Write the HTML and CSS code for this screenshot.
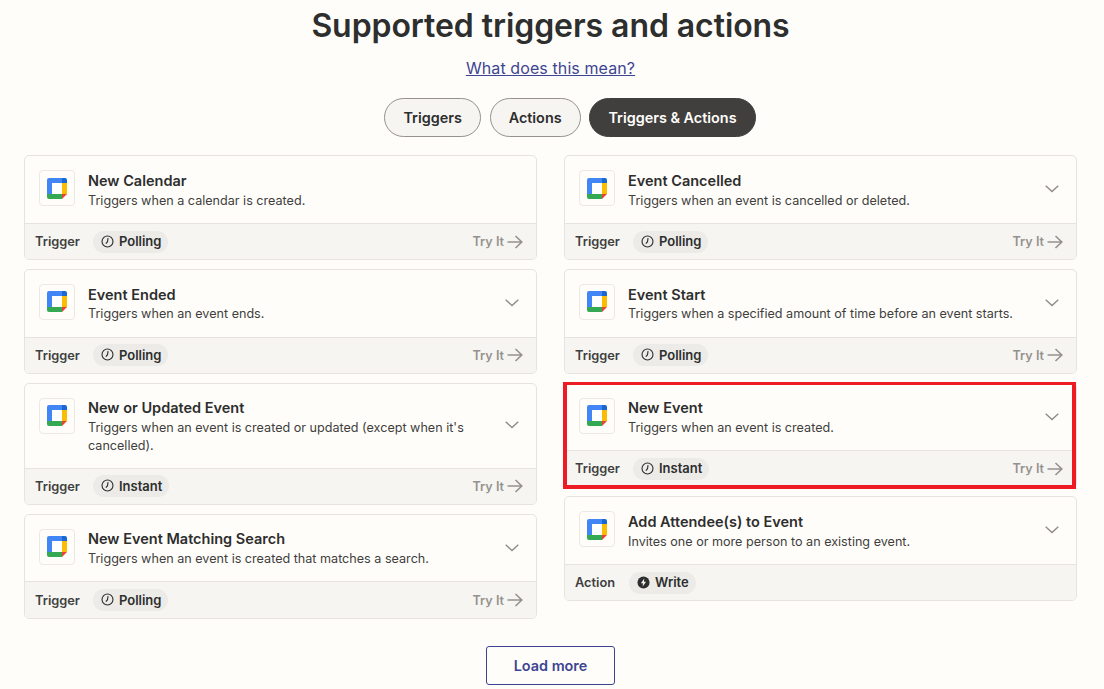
FILE: index.html
```html
<!DOCTYPE html>
<html lang="en">
<head>
<meta charset="utf-8">
<title>Supported triggers and actions</title>
<link rel="stylesheet" href="styles.css">
</head>
<body>
<svg class="defs" width="0" height="0" aria-hidden="true">
  <symbol id="gcal" viewBox="0 0 20 21">
    <path fill="#4285f4" d="M2 0H15V5H5V16H0V2A2 2 0 0 1 2 0Z"/>
    <path fill="#1967d2" d="M15 0H18A2 2 0 0 1 20 2V5H15Z"/>
    <path fill="#fbbc04" d="M15 5H20V16H15Z"/>
    <path fill="#34a853" d="M5 16H15V21H2A2 2 0 0 1 0 19V16Z"/>
    <path fill="#ea4335" d="M15 16H20L15 21Z"/>
    <path fill="#fff" d="M5 5H15V16H5Z"/>
  </symbol>
  <symbol id="clock" viewBox="0 0 14 14">
    <circle cx="7" cy="7" r="5.9" fill="none" stroke="currentColor" stroke-width="1.2"/>
    <path d="M7.6 3.4 7 7.2 5.2 9.2" fill="none" stroke="currentColor" stroke-width="1.2"/>
  </symbol>
  <symbol id="bolt" viewBox="0 0 14 14">
    <circle cx="7" cy="7" r="6.5" fill="currentColor"/>
    <path d="M7.8 2.8 4.2 7.8H6.4L6.1 11.2 9.8 6.2H7.5Z" fill="#f0efeb"/>
  </symbol>
  <symbol id="arrow" viewBox="0 0 16 14">
    <path d="M0.5 7H14.5M8.5 1 14.8 7 8.5 13" fill="none" stroke="currentColor" stroke-width="1.6"/>
  </symbol>
  <symbol id="chev" viewBox="0 0 14 8">
    <path d="M0.7 0.8 7 6.6 13.3 0.8" fill="none" stroke="currentColor" stroke-width="1.4"/>
  </symbol>
</svg>

<main class="page">
  <h1 class="title">Supported triggers and actions</h1>
  <a class="what" href="#">What does this mean?</a>
  <div class="tabs">
    <button class="tab">Triggers</button>
    <button class="tab">Actions</button>
    <button class="tab tab-on">Triggers &amp; Actions</button>
  </div>

  <div class="columns">
    <div class="col">
      <article class="card">
        <div class="card-top">
          <span class="logo"><svg class="logo-svg"><use href="#gcal"/></svg></span>
          <div class="text"><h3 class="name">New Calendar</h3><p class="desc">Triggers when a calendar is created.</p></div>
        </div>
        <div class="card-foot">
          <span class="kind">Trigger</span>
          <span class="pill"><svg class="pill-icon"><use href="#clock"/></svg>Polling</span>
          <span class="try">Try It<svg class="arrow"><use href="#arrow"/></svg></span>
        </div>
      </article>
      <article class="card">
        <div class="card-top">
          <span class="logo"><svg class="logo-svg"><use href="#gcal"/></svg></span>
          <div class="text"><h3 class="name">Event Ended</h3><p class="desc">Triggers when an event ends.</p></div>
          <svg class="chev"><use href="#chev"/></svg>
        </div>
        <div class="card-foot">
          <span class="kind">Trigger</span>
          <span class="pill"><svg class="pill-icon"><use href="#clock"/></svg>Polling</span>
          <span class="try">Try It<svg class="arrow"><use href="#arrow"/></svg></span>
        </div>
      </article>
      <article class="card">
        <div class="card-top">
          <span class="logo"><svg class="logo-svg"><use href="#gcal"/></svg></span>
          <div class="text"><h3 class="name">New or Updated Event</h3><p class="desc">Triggers when an event is created or updated (except when it's cancelled).</p></div>
          <svg class="chev"><use href="#chev"/></svg>
        </div>
        <div class="card-foot">
          <span class="kind">Trigger</span>
          <span class="pill"><svg class="pill-icon"><use href="#clock"/></svg>Instant</span>
          <span class="try">Try It<svg class="arrow"><use href="#arrow"/></svg></span>
        </div>
      </article>
      <article class="card">
        <div class="card-top">
          <span class="logo"><svg class="logo-svg"><use href="#gcal"/></svg></span>
          <div class="text"><h3 class="name">New Event Matching Search</h3><p class="desc">Triggers when an event is created that matches a search.</p></div>
          <svg class="chev"><use href="#chev"/></svg>
        </div>
        <div class="card-foot">
          <span class="kind">Trigger</span>
          <span class="pill"><svg class="pill-icon"><use href="#clock"/></svg>Polling</span>
          <span class="try">Try It<svg class="arrow"><use href="#arrow"/></svg></span>
        </div>
      </article>
    </div>

    <div class="col">
      <article class="card">
        <div class="card-top">
          <span class="logo"><svg class="logo-svg"><use href="#gcal"/></svg></span>
          <div class="text"><h3 class="name">Event Cancelled</h3><p class="desc">Triggers when an event is cancelled or deleted.</p></div>
          <svg class="chev"><use href="#chev"/></svg>
        </div>
        <div class="card-foot">
          <span class="kind">Trigger</span>
          <span class="pill"><svg class="pill-icon"><use href="#clock"/></svg>Polling</span>
          <span class="try">Try It<svg class="arrow"><use href="#arrow"/></svg></span>
        </div>
      </article>
      <article class="card">
        <div class="card-top">
          <span class="logo"><svg class="logo-svg"><use href="#gcal"/></svg></span>
          <div class="text"><h3 class="name">Event Start</h3><p class="desc">Triggers when a specified amount of time before an event starts.</p></div>
          <svg class="chev"><use href="#chev"/></svg>
        </div>
        <div class="card-foot">
          <span class="kind">Trigger</span>
          <span class="pill"><svg class="pill-icon"><use href="#clock"/></svg>Polling</span>
          <span class="try">Try It<svg class="arrow"><use href="#arrow"/></svg></span>
        </div>
      </article>
      <article class="card card-marked">
        <div class="card-top">
          <span class="logo"><svg class="logo-svg"><use href="#gcal"/></svg></span>
          <div class="text"><h3 class="name">New Event</h3><p class="desc">Triggers when an event is created.</p></div>
          <svg class="chev"><use href="#chev"/></svg>
        </div>
        <div class="card-foot">
          <span class="kind">Trigger</span>
          <span class="pill"><svg class="pill-icon"><use href="#clock"/></svg>Instant</span>
          <span class="try">Try It<svg class="arrow"><use href="#arrow"/></svg></span>
        </div>
      </article>
      <article class="card">
        <div class="card-top">
          <span class="logo"><svg class="logo-svg"><use href="#gcal"/></svg></span>
          <div class="text"><h3 class="name">Add Attendee(s) to Event</h3><p class="desc">Invites one or more person to an existing event.</p></div>
          <svg class="chev"><use href="#chev"/></svg>
        </div>
        <div class="card-foot">
          <span class="kind">Action</span>
          <span class="pill pill-write"><svg class="pill-icon"><use href="#bolt"/></svg>Write</span>
        </div>
      </article>
    </div>
  </div>

  <button class="load">Load more</button>
</main>
</body>
</html>
```
FILE: styles.css
```css
* { box-sizing: border-box; }
html, body { margin: 0; height: 100%; overflow: hidden; }
body {
  background: #fffdf9;
  color: #2d2e2e;
  font-family: Inter, "Liberation Sans", sans-serif;
}
.defs { position: absolute; }
.page {
  display: flex;
  flex-direction: column;
  align-items: center;
  padding: 0 27px 0 24px;
}
.title {
  margin: 4px 0 0;
  font-size: 32px;
  line-height: 44px;
  font-weight: 600;
  letter-spacing: -0.07px;
}
.what {
  margin-top: 9px;
  font-size: 16px;
  line-height: 22px;
  letter-spacing: 0.1px;
  color: #3d4592;
}
.tabs {
  display: flex;
  gap: 8.8px;
  margin-top: 19px;
  margin-left: 39px;
}
.tab {
  height: 39px;
  padding: 0 18px;
  border: 1px solid #95928e;
  border-radius: 20px;
  background: #f7f5f2;
  color: #2d2e2e;
  font: 600 14.4px Inter, sans-serif;
}
.tab-on {
  background: #403f3e;
  border-color: #403f3e;
  color: #fffdf9;
}
.columns {
  display: flex;
  align-items: flex-start;
  gap: 27px;
  width: 100%;
  margin-top: 18.3px;
}
.col {
  flex: 1 1 0;
  display: flex;
  flex-direction: column;
  gap: 8.7px;
}
.card {
  position: relative;
  border: 1px solid #e6e4dd;
  border-radius: 5px;
  background: #fffdf9;
}
.card-marked::after {
  content: "";
  position: absolute;
  inset: -2px 0 -2px -2px;
  border-style: solid;
  border-color: #ed1c24;
  border-width: 3px 4px 4px;
  pointer-events: none;
}
.card-top {
  display: flex;
  align-items: flex-start;
  padding: 14px 17px 12.4px 14px;
  min-height: 66.7px;
}
.logo {
  flex: none;
  display: flex;
  align-items: center;
  justify-content: center;
  width: 36px;
  height: 36px;
  margin-right: 13px;
  border: 1px solid #ece9e3;
  border-radius: 4px;
  background: #fffdf9;
}
.logo-svg { width: 20px; height: 21px; }
.text { flex: 1; min-width: 0; margin-top: 0.7px; padding-right: 24px; }
.name {
  margin: 0;
  font-size: 14.5px;
  line-height: 20.6px;
  font-weight: 600;
}
.desc {
  margin: 0;
  font-size: 12.6px;
  line-height: 18.2px;
  color: #403f3e;
}
.chev {
  flex: none;
  align-self: center;
  width: 14px;
  height: 8px;
  margin-bottom: 2px;
  color: #8f8c87;
}
.card-foot {
  display: flex;
  align-items: center;
  height: 36.3px;
  padding: 0 13px 0 10px;
  border-top: 1px solid #e6e4dd;
  border-radius: 0 0 4px 4px;
  background: #f7f5f2;
}
.kind {
  font-size: 12.8px;
  font-weight: 600;
  color: #403f3e;
}
.pill {
  display: flex;
  align-items: center;
  gap: 5px;
  height: 22px;
  margin-left: 13px;
  padding: 0 7px 1px 8px;
  border-radius: 11px;
  background: #ecebe7;
  font-size: 13px;
  font-weight: 600;
  color: #2d2e2e;
}
.pill-write { margin-left: 14px; }
.pill-icon { width: 13px; height: 13px; color: #2d2e2e; }
.try {
  display: flex;
  align-items: center;
  gap: 3px;
  margin-left: auto;
  font-size: 12.6px;
  font-weight: 600;
  color: #95928e;
}
.arrow { width: 16px; height: 14px; }
.load {
  width: 129px;
  height: 39px;
  margin-top: 27px;
  border: 1px solid #3d4592;
  border-radius: 3px;
  background: transparent;
  color: #3d4592;
  font: 600 14.4px Inter, sans-serif;
}
```
